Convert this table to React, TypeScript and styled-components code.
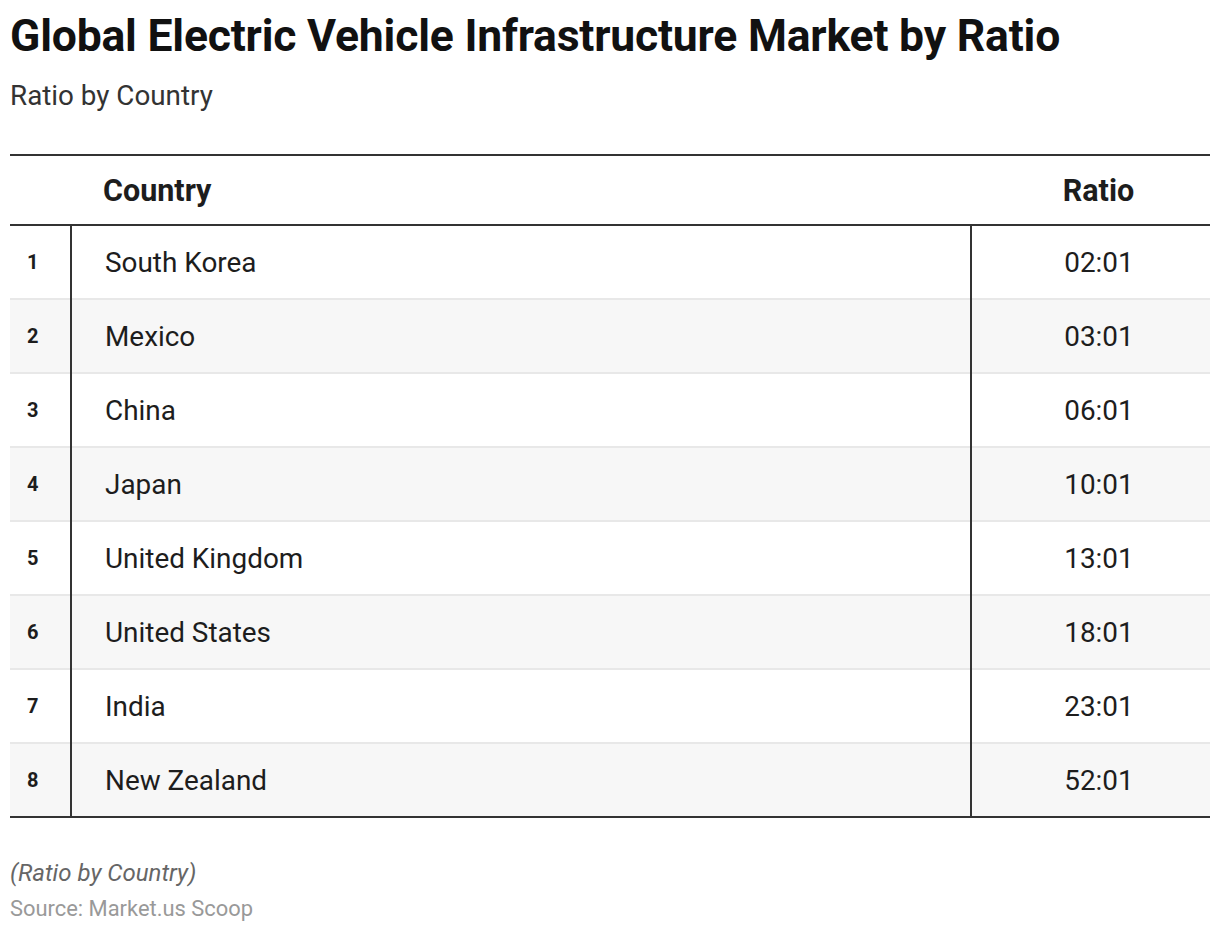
import React from "react";
import styled, { createGlobalStyle } from "styled-components";

const GlobalStyle = createGlobalStyle`
  html, body {
    margin: 0;
    padding: 0;
    background: #ffffff;
  }
  body {
    font-family: Roboto, "Liberation Sans", Arial, sans-serif;
    color: #1d1d1d;
  }
`;

interface Row {
  country: string;
  ratio: string;
}

const rows: Row[] = [
  { country: "South Korea", ratio: "02:01" },
  { country: "Mexico", ratio: "03:01" },
  { country: "China", ratio: "06:01" },
  { country: "Japan", ratio: "10:01" },
  { country: "United Kingdom", ratio: "13:01" },
  { country: "United States", ratio: "18:01" },
  { country: "India", ratio: "23:01" },
  { country: "New Zealand", ratio: "52:01" },
];

const Page = styled.div`
  padding: 10px 10px 0 10px;
  width: 1200px;
`;

const Title = styled.h1`
  margin: 0;
  font-size: 44.5px;
  font-weight: 700;
  line-height: 52px;
  color: #111;
  letter-spacing: -0.2px;
`;

const Subtitle = styled.p`
  margin: 17px 0 0 0;
  font-size: 27.8px;
  line-height: 34px;
  color: #333;
`;

const Table = styled.table`
  margin-top: 41px;
  width: 100%;
  border-collapse: collapse;
  border-top: 2px solid #333;
  border-bottom: 2px solid #333;
`;

const HeadRow = styled.tr`
  height: 70px;
  border-bottom: 2px solid #333;
`;

const HeadCell = styled.th<{ $align?: "left" | "center" }>`
  font-size: 30.5px;
  font-weight: 700;
  color: #1d1d1d;
  text-align: ${(p) => p.$align ?? "left"};
  padding: 0 0 0 ${(p) => (p.$align === "center" ? "16px" : "32px")};
`;

const BodyRow = styled.tr<{ $striped: boolean }>`
  height: 74px;
  background: ${(p) => (p.$striped ? "#f7f7f7" : "#ffffff")};
  & + & {
    border-top: 2px solid #e8e8e8;
  }
`;

const IndexCell = styled.td`
  width: 61px;
  font-size: 20px;
  font-weight: 700;
  color: #1d1d1d;
  text-align: left;
  padding: 0 0 0 17px;
  box-sizing: border-box;
  border-right: 2px solid #333;
`;

const CountryCell = styled.td`
  font-size: 27.9px;
  color: #1d1d1d;
  padding: 0 0 0 33px;
`;

const RatioCell = styled.td`
  width: 239px;
  font-size: 27.9px;
  color: #1d1d1d;
  text-align: center;
  padding: 0 0 0 16px;
  box-sizing: border-box;
  border-left: 2px solid #333;
`;

const Notes = styled.div`
  margin-top: 38px;
`;

const Caption = styled.p`
  margin: 0;
  font-size: 24px;
  font-style: italic;
  line-height: 34px;
  color: #666;
`;

const Source = styled.p`
  margin: 4px 0 0 0;
  font-size: 21.9px;
  line-height: 30px;
  color: #999;
`;

export default function App() {
  return (
    <Page>
      <GlobalStyle />
      <Title>Global Electric Vehicle Infrastructure Market by Ratio</Title>
      <Subtitle>Ratio by Country</Subtitle>
      <Table>
        <thead>
          <HeadRow>
            <HeadCell />
            <HeadCell>Country</HeadCell>
            <HeadCell $align="center">Ratio</HeadCell>
          </HeadRow>
        </thead>
        <tbody>
          {rows.map((r, i) => (
            <BodyRow key={r.country} $striped={i % 2 === 1}>
              <IndexCell>{i + 1}</IndexCell>
              <CountryCell>{r.country}</CountryCell>
              <RatioCell>{r.ratio}</RatioCell>
            </BodyRow>
          ))}
        </tbody>
      </Table>
      <Notes>
        <Caption>(Ratio by Country)</Caption>
        <Source>Source: Market.us Scoop</Source>
      </Notes>
    </Page>
  );
}
